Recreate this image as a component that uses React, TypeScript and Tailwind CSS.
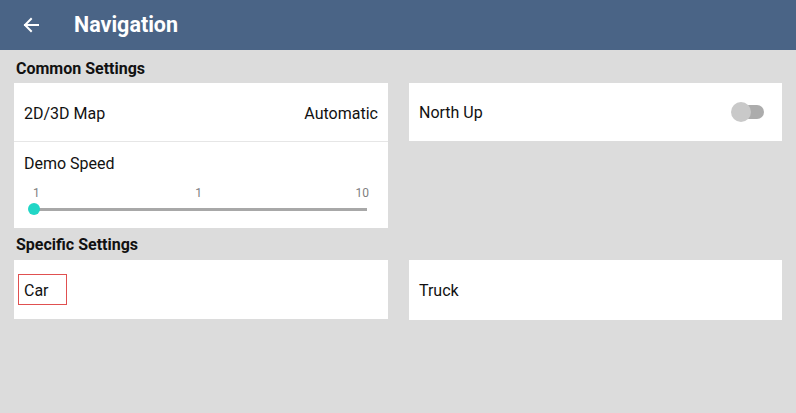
import React from "react";

export default function App() {
  return (
    <div className="w-[796px] h-[413px] bg-[#dcdcdc] overflow-hidden" style={{ fontFamily: "Roboto, 'Liberation Sans', sans-serif" }}>
      <div className="h-[50px] bg-[#4a6486] flex items-center">
        <svg width="18" height="18" viewBox="0 0 18 18" className="ml-[22px]">
          <path d="M16 9H3M9 3L3 9l6 6" stroke="white" strokeWidth="2" fill="none" strokeLinecap="square" />
        </svg>
        <span className="ml-[34px] text-white text-[21.5px] font-bold">Navigation</span>
      </div>
      <div className="px-[14px] pt-[8px]">
        <div className="text-[16px] font-bold text-[#111] pl-[2px] h-[25px] leading-[21px]">Common Settings</div>
        <div className="flex gap-[21px] items-start">
          <div className="w-[375px] bg-white">
            <div className="h-[59px] flex items-center justify-between px-[10px] pt-[3px] border-b border-[#e6e6e6] text-[16px] text-[#111]">
              <span>2D/3D Map</span>
              <span>Automatic</span>
            </div>
            <div className="h-[86px] px-[10px] pt-[12px]">
              <div className="text-[16px] text-[#111] leading-[20px]">Demo Speed</div>
              <div className="relative mt-[12px] mx-[10px] h-[40px]">
                <div className="flex justify-between text-[12px] text-[#808080] leading-[14px]">
                  <span className="ml-[-1px]">1</span>
                  <span className="mr-[-2px]">1</span>
                  <span className="mr-[-1px]">10</span>
                </div>
                <div className="absolute left-0 right-[1px] top-[22px] h-[3px] bg-[#a8a8a8]" />
                <div className="absolute left-[-6px] top-[17px] w-[12px] h-[12px] rounded-full bg-[#21d6c6]" />
              </div>
            </div>
          </div>
          <div className="w-[374px] bg-white h-[58px] flex items-center justify-between px-[10px]">
            <span className="text-[16px] text-[#111] pt-[2px]">North Up</span>
            <div className="relative w-[33px] h-[20px] mr-[8px]">
              <div className="absolute right-0 top-[3px] w-[22px] h-[14px] rounded-full bg-[#acacac]" />
              <div className="absolute left-0 top-0 w-[20px] h-[20px] rounded-full bg-[#c9c9c9]" />
            </div>
          </div>
        </div>
        <div className="text-[16px] font-bold text-[#111] pl-[2px] mt-[6px] h-[26px] leading-[21px]">Specific Settings</div>
        <div className="flex gap-[21px]">
          <div className="w-[375px] h-[59px] bg-white flex items-center px-[4px]">
            <div className="w-[49px] h-[31px] border border-[#e05050] flex items-center pl-[5px] pt-[2px] text-[16px] text-[#111]">Car</div>
          </div>
          <div className="w-[374px] h-[60px] bg-white flex items-center px-[10px] pt-[2px] text-[16px] text-[#111]">Truck</div>
        </div>
      </div>
    </div>
  );
}
